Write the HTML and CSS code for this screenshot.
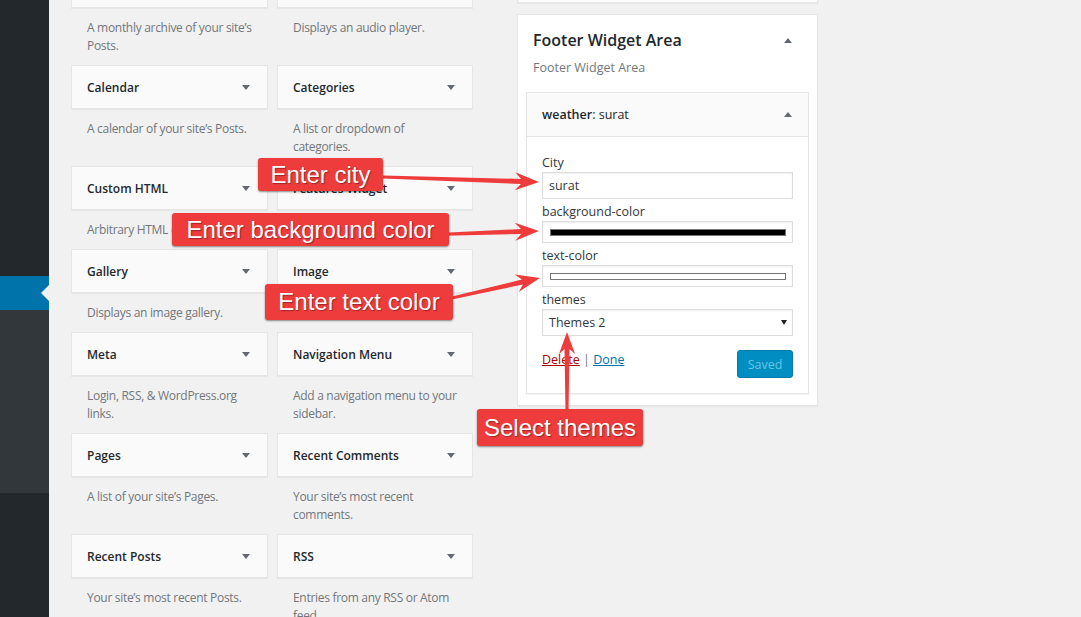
FILE: index.html
```html
<!DOCTYPE html>
<html lang="en">
<head>
<meta charset="utf-8">
<title>Widgets</title>
<link rel="stylesheet" href="styles.css">
</head>
<body>
<div class="admin">
  <nav class="sidebar">
    <div class="menu-top"></div>
    <div class="menu-current"><span class="notch"></span></div>
    <div class="submenu"></div>
  </nav>
  <main class="content">
    <section class="available">
      <div class="widget"><div class="widget-top"><span>Archives</span><i class="arrow-down"></i></div><p class="widget-desc">A monthly archive of your site’s Posts.</p></div>
      <div class="widget"><div class="widget-top"><span>Audio</span><i class="arrow-down"></i></div><p class="widget-desc">Displays an audio player.</p></div>
      <div class="widget"><div class="widget-top"><span>Calendar</span><i class="arrow-down"></i></div><p class="widget-desc">A calendar of your site’s Posts.</p></div>
      <div class="widget"><div class="widget-top"><span>Categories</span><i class="arrow-down"></i></div><p class="widget-desc">A list or dropdown of categories.</p></div>
      <div class="widget"><div class="widget-top"><span>Custom HTML</span><i class="arrow-down"></i></div><p class="widget-desc">Arbitrary HTML code.</p></div>
      <div class="widget"><div class="widget-top"><span>Features Widget</span><i class="arrow-down"></i></div><p class="widget-desc">Features list.</p></div>
      <div class="widget"><div class="widget-top"><span>Gallery</span><i class="arrow-down"></i></div><p class="widget-desc">Displays an image gallery.</p></div>
      <div class="widget"><div class="widget-top"><span>Image</span><i class="arrow-down"></i></div><p class="widget-desc">Displays an image.</p></div>
      <div class="widget"><div class="widget-top"><span>Meta</span><i class="arrow-down"></i></div><p class="widget-desc">Login, RSS, &amp; WordPress.org links.</p></div>
      <div class="widget"><div class="widget-top"><span>Navigation Menu</span><i class="arrow-down"></i></div><p class="widget-desc">Add a navigation menu to your sidebar.</p></div>
      <div class="widget"><div class="widget-top"><span>Pages</span><i class="arrow-down"></i></div><p class="widget-desc">A list of your site’s Pages.</p></div>
      <div class="widget"><div class="widget-top"><span>Recent Comments</span><i class="arrow-down"></i></div><p class="widget-desc">Your site’s most recent comments.</p></div>
      <div class="widget"><div class="widget-top"><span>Recent Posts</span><i class="arrow-down"></i></div><p class="widget-desc">Your site’s most recent Posts.</p></div>
      <div class="widget"><div class="widget-top"><span>RSS</span><i class="arrow-down"></i></div><p class="widget-desc">Entries from any RSS or Atom feed.</p></div>
    </section>

    <section class="sidebars">
      <div class="prev-box"></div>
      <div class="sidebar-box">
        <div class="sidebar-name">
          <h2>Footer Widget Area</h2>
          <i class="arrow-up"></i>
        </div>
        <p class="sidebar-desc">Footer Widget Area</p>
        <div class="open-widget">
          <div class="w-head">
            <h3><b>weather</b>: surat</h3>
            <i class="arrow-up"></i>
          </div>
          <div class="w-body">
            <label class="lbl">City</label>
            <div class="text-input">surat</div>
            <label class="lbl">background-color</label>
            <div class="color-input"><span class="swatch swatch-black"></span></div>
            <label class="lbl">text-color</label>
            <div class="color-input"><span class="swatch swatch-white"></span></div>
            <label class="lbl">themes</label>
            <div class="select"><span>Themes 2</span><i class="select-arrow"></i></div>
            <div class="actions">
              <div class="links"><a class="delete" href="#">Delete</a> <span class="sep">|</span> <a class="done" href="#">Done</a></div>
              <button class="saved" type="button">Saved</button>
            </div>
          </div>
        </div>
      </div>
    </section>
  </main>
</div>

<div class="annotations">
  <svg class="arrows" width="1081" height="617" viewBox="0 0 1081 617">
    <g transform="translate(539 182) rotate(1.8)">
      <polygon points="0,0 -24,-9 -18,-2.5 -156,-1.5 -156,1.5 -18,2.5 -24,9"/>
    </g>
    <g transform="translate(539 231) rotate(-1.9)">
      <polygon points="0,0 -24,-9 -18,-2.5 -95,-1.5 -95,1.5 -18,2.5 -24,9"/>
    </g>
    <g transform="translate(540 278) rotate(-12.8)">
      <polygon points="0,0 -24,-9 -18,-2.5 -92,-1.5 -92,1.5 -18,2.5 -24,9"/>
    </g>
    <g transform="translate(567 332) rotate(-90)">
      <polygon points="0,0 -22,-8 -17,-2.5 -80,-1.5 -80,1.5 -17,2.5 -22,8"/>
    </g>
  </svg>
  <div class="tag tag-city">Enter city</div>
  <div class="tag tag-bg">Enter background color</div>
  <div class="tag tag-text">Enter text color</div>
  <div class="tag tag-themes">Select themes</div>
</div>
</body>
</html>
```
FILE: styles.css
```css
* { box-sizing: border-box; }

body {
  margin: 0;
  width: 1081px;
  height: 617px;
  overflow: hidden;
  position: relative;
  background: #f1f1f1;
  font-family: "Open Sans", "Noto Sans", sans-serif;
  font-size: 12px;
  color: #23282d;
}

.admin { display: flex; height: 617px; }

/* left admin menu */
.sidebar {
  width: 49px;
  flex: none;
  background: #23282d;
  display: flex;
  flex-direction: column;
}
.menu-top { height: 276px; }
.menu-current { height: 34px; background: #0073aa; position: relative; }
.notch {
  position: absolute;
  right: 0;
  top: 9px;
  width: 0;
  height: 0;
  border-top: 8px solid transparent;
  border-bottom: 8px solid transparent;
  border-right: 8px solid #f1f1f1;
}
.submenu { height: 183px; background: #32373c; }

/* main */
.content {
  display: flex;
  align-items: flex-start;
  gap: 44px;
  padding-left: 22px;
}

.available {
  display: grid;
  grid-template-columns: 197px 196px;
  column-gap: 9px;
  margin-top: -36px;
}

.widget-top {
  height: 44px;
  background: #fafafa;
  border: 1px solid #e5e5e5;
  box-shadow: 0 1px 1px rgba(0, 0, 0, .04);
  display: flex;
  align-items: center;
  justify-content: space-between;
  padding: 0 17px 0 15px;
  font-size: 12px;
  font-weight: 600;
}

.arrow-down {
  width: 0;
  height: 0;
  border-left: 4px solid transparent;
  border-right: 4px solid transparent;
  border-top: 5px solid #646970;
}
.arrow-up {
  width: 0;
  height: 0;
  border-left: 4px solid transparent;
  border-right: 4px solid transparent;
  border-bottom: 5px solid #646970;
}

.widget-desc {
  margin: 0;
  padding: 11px 10px 10px 16px;
  line-height: 18px;
  font-size: 12px;
  color: #72777c;
  letter-spacing: -0.3px;
}

/* right: sidebars */
.sidebars {
  width: 301px;
  margin-top: -37px;
}
.prev-box {
  height: 40px;
  background: #fff;
  border: 1px solid #e5e5e5;
  box-shadow: 0 1px 1px rgba(0, 0, 0, .04);
}
.sidebar-box {
  margin-top: 11px;
  background: #fff;
  border: 1px solid #e5e5e5;
  box-shadow: 0 1px 1px rgba(0, 0, 0, .04);
  padding: 0 8px 11px;
}
.sidebar-name {
  display: flex;
  align-items: center;
  justify-content: space-between;
  padding: 15px 17px 0 7px;
}
.sidebar-name h2 {
  margin: 0;
  font-size: 16px;
  font-weight: 600;
  line-height: 20px;
}
.sidebar-desc {
  margin: 9px 0 0;
  padding-left: 7px;
  line-height: 18px;
  font-size: 12.5px;
  color: #72777c;
}

.open-widget {
  margin-top: 15px;
  border: 1px solid #e5e5e5;
  box-shadow: 0 1px 1px rgba(0, 0, 0, .04);
}
.w-head {
  height: 44px;
  background: #fafafa;
  border-bottom: 1px solid #e5e5e5;
  display: flex;
  align-items: center;
  justify-content: space-between;
  padding: 0 16px 0 15px;
}
.w-head h3 {
  margin: 0;
  font-size: 12.5px;
  font-weight: 400;
}
.w-head b { font-weight: 600; }

.w-body {
  background: #fff;
  padding: 17px 15px 15px;
}
.lbl {
  display: block;
  line-height: 18px;
  margin-top: 4px;
  font-size: 12.5px;
  color: #32373c;
}
.lbl:first-child { margin-top: 0; }

.text-input {
  height: 27px;
  border: 1px solid #ddd;
  box-shadow: inset 0 1px 2px rgba(0, 0, 0, .07);
  padding: 0 6px;
  display: flex;
  align-items: center;
  font-size: 12.5px;
  color: #32373c;
}
.color-input {
  height: 22px;
  border: 1px solid #ddd;
  box-shadow: inset 0 1px 2px rgba(0, 0, 0, .07);
  padding: 0 6px 0 7px;
  display: flex;
  align-items: center;
}
.swatch {
  flex: 1;
  height: 7px;
  border: 1px solid #767676;
}
.swatch-black { background: #000; }
.swatch-white { background: #fff; }

.select {
  height: 27px;
  border: 1px solid #ddd;
  box-shadow: inset 0 1px 2px rgba(0, 0, 0, .07);
  padding: 0 5px 0 6px;
  display: flex;
  align-items: center;
  justify-content: space-between;
  font-size: 12.5px;
  color: #32373c;
}
.select-arrow {
  width: 0;
  height: 0;
  border-left: 3px solid transparent;
  border-right: 3px solid transparent;
  border-top: 5px solid #222;
}

.actions {
  margin-top: 14px;
  height: 28px;
  display: flex;
  align-items: flex-start;
  justify-content: space-between;
}
.links {
  margin-top: 1px;
  line-height: 18px;
  font-size: 12.5px;
}
.delete { color: #a00; }
.done { color: #0073aa; }
.sep { color: #72777c; }
.saved {
  width: 56px;
  height: 28px;
  background: #008ec2;
  color: #66c6e4;
  border: 1px solid #0078a8;
  border-radius: 3px;
  font-family: inherit;
  font-size: 12.5px;
  padding: 0;
}

/* annotation overlay */
.annotations {
  position: absolute;
  left: 0;
  top: 0;
  width: 1081px;
  height: 617px;
  pointer-events: none;
}
.arrows {
  position: absolute;
  left: 0;
  top: 0;
}
.arrows polygon { fill: #ee3b3b; }

.tag {
  position: absolute;
  display: flex;
  align-items: center;
  justify-content: center;
  background: #ee3b3b;
  color: #fff;
  font-family: "Liberation Sans", Arial, sans-serif;
  font-size: 24px;
  line-height: 1;
  border-radius: 3px;
  box-shadow: 0 1px 2px rgba(0, 0, 0, .45);
  text-shadow: 1px 1px 1px rgba(0, 0, 0, .35);
  white-space: nowrap;
}
.tag-city { left: 258px; top: 158px; width: 125px; height: 33px; }
.tag-bg { left: 172px; top: 213px; width: 277px; height: 33px; }
.tag-text { left: 265px; top: 284px; width: 188px; height: 36px; }
.tag-themes { left: 477px; top: 409px; width: 166px; height: 37px; }
```
